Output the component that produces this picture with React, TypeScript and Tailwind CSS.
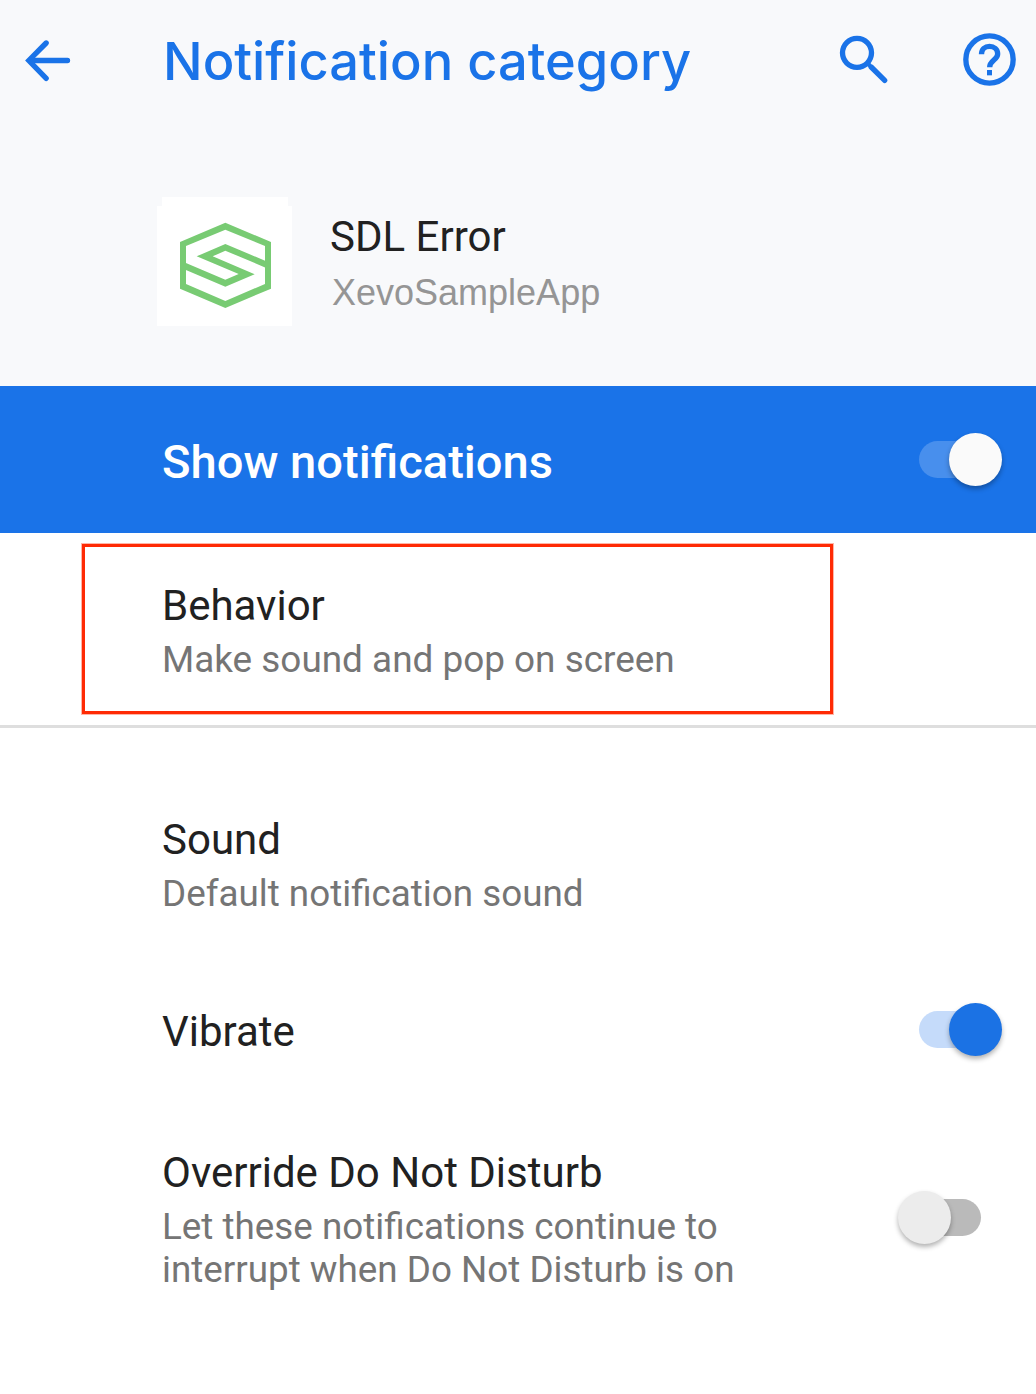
import React from "react";

function Toggle({ on, inverse }: { on?: boolean; inverse?: boolean }) {
  const track = inverse ? "bg-[#488fed]" : on ? "bg-[#c5dbfa]" : "bg-[#bababa]";
  const thumb = inverse ? "bg-[#fafafa]" : on ? "bg-[#1b72e4]" : "bg-[#ececec]";
  return (
    <button
      role="switch"
      aria-checked={!!on}
      className={`relative h-[37px] w-[62px] shrink-0 rounded-full ${track}`}
    >
      <span
        className={`absolute -top-2 size-[53px] rounded-full shadow-[0_3px_5px_rgba(0,0,0,0.3)] ${thumb} ${on ? "left-[30px]" : "-left-[21px]"}`}
      />
    </button>
  );
}

function BackIcon() {
  return (
    <svg className="h-[43.33px] w-[48px]" viewBox="72 57 144 130" fill="none" stroke="currentColor" strokeWidth="16" strokeLinecap="round">
      <path d="M202.500 121.500H92" />
      <path d="M138.500 69L86.500 121.500L138.500 175" />
    </svg>
  );
}

function SearchIcon() {
  return (
    <svg className="size-[51px]" viewBox="54 57 153 153" fill="none" stroke="currentColor">
      <circle cx="111" cy="113.500" r="43.500" strokeWidth="16" />
      <path d="M140 142L150 152" strokeWidth="13" />
      <path d="M153.500 156L194 196" strokeWidth="16" strokeLinecap="round" />
    </svg>
  );
}

function HelpIcon() {
  return (
    <svg className="size-[55px]" viewBox="426 51 165 165" fill="none" stroke="currentColor" strokeWidth="16">
      <circle cx="508.500" cy="133.500" r="71" />
      <path d="M484.500 118C484.500 103 495 94 508.500 94S533 103 533 117C533 135 509 136 509 157" strokeWidth="16" />
      <path d="M501 173H516" />
    </svg>
  );
}

function AppLogo() {
  return (
    <svg className="h-[129px] w-[135px] shrink-0" viewBox="36 36 405 387">
      <path d="M51 36H429V63H441V423H36V63H51Z" fill="#fff" />
      <g fill="#78cb73">
        <path
          fillRule="evenodd"
          d="M241 113L378 171V311L241 369L105 311V171ZM241 134L123 183V297L241 348L360 297V183Z"
        />
        <path d="M362 248V228L241 177L155 214L281 267L241 284L121 233V254L241 305L329 268L203 214L241 197Z" />
      </g>
    </svg>
  );
}

export default function App() {
  return (
    <main className="h-[1394px] w-[1036px] overflow-hidden bg-white font-['Roboto',sans-serif] text-[#212121]">
      <div className="h-[386px] bg-[#f8f9fb]">
        <header className="flex h-[120px] items-center text-[#1a73e8]">
          <button className="mt-[2px] ml-[24px] shrink-0">
            <BackIcon />
          </button>
          <h1 className="mt-[2px] ml-[91px] w-[675px] shrink-0 font-['Inter',sans-serif] text-[52.4px] font-medium whitespace-nowrap">
            Notification category
          </h1>
          <button className="mb-[2px] shrink-0">
            <SearchIcon />
          </button>
          <button className="mb-[2px] ml-[73px] shrink-0">
            <HelpIcon />
          </button>
        </header>
        <section className="flex pt-[77px] pl-[157px]">
          <AppLogo />
          <div className="ml-[38px] pt-[15px]">
            <h2 className="text-[42px] leading-[50px]">SDL Error</h2>
            <p className="mt-[9px] ml-[2px] font-['Liberation_Sans',sans-serif] text-[36px] leading-[44px] text-[#959595]">
              XevoSampleApp
            </p>
          </div>
        </section>
      </div>
      <section className="flex h-[147px] items-center justify-between bg-[#1a73e8] pr-[55px] pl-[162px] text-white">
        <h2 className="pt-[5px] text-[47.1px] font-medium">Show notifications</h2>
        <Toggle on inverse />
      </section>
      <section className="relative h-[195px] border-b-[3px] border-[#dedede] pt-[48px] pl-[162px]">
        <h3 className="text-[42px] leading-[50px]">Behavior</h3>
        <p className="text-[36.9px] leading-[58px] text-[#757575]">Make sound and pop on screen</p>
        <div className="absolute top-[11px] left-[82px] h-[170px] w-[751px] border-[3px] border-[#ff2a04] shadow-[0_0_0_1px_rgba(255,42,4,0.35)]" />
      </section>
      <section className="h-[222px] pt-[87px] pl-[162px]">
        <h3 className="text-[42px] leading-[50px]">Sound</h3>
        <p className="text-[36.8px] leading-[58px] text-[#757575]">Default notification sound</p>
      </section>
      <section className="flex h-[159px] items-center justify-between pr-[55px] pl-[162px]">
        <h3 className="pt-[3px] text-[42px]">Vibrate</h3>
        <Toggle on />
      </section>
      <section className="flex justify-between pt-[39px] pr-[55px] pl-[162px]">
        <div>
          <h3 className="text-[42px] leading-[50px]">Override Do Not Disturb</h3>
          <p className="w-[600px] pt-[7px] text-[36.8px] leading-[43px] text-[#757575]">
            Let these notifications continue to interrupt when Do Not Disturb is on
          </p>
        </div>
        <div className="pt-[51px]">
          <Toggle />
        </div>
      </section>
    </main>
  );
}
